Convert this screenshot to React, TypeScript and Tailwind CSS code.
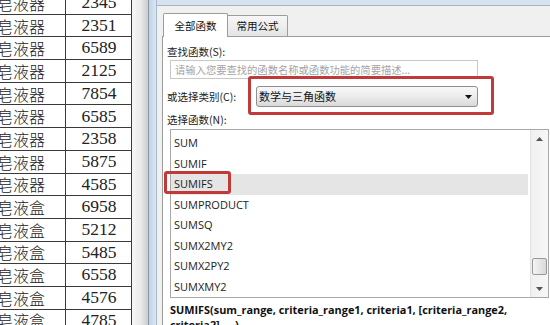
import React from "react";

const rows: [string, string][] = [
  ["皂液器", "2345"],
  ["皂液器", "2351"],
  ["皂液器", "6589"],
  ["皂液器", "2125"],
  ["皂液器", "7854"],
  ["皂液器", "6585"],
  ["皂液器", "2358"],
  ["皂液器", "5875"],
  ["皂液器", "4585"],
  ["皂液盒", "6958"],
  ["皂液盒", "5212"],
  ["皂液盒", "5485"],
  ["皂液盒", "6558"],
  ["皂液盒", "4576"],
  ["皂液盒", "4785"],
];

const funcs = ["SUM", "SUMIF", "SUMIFS", "SUMPRODUCT", "SUMSQ", "SUMX2MY2", "SUMX2PY2", "SUMXMY2"];

const cjk = "font-['Noto_Sans_CJK_SC','Noto_Sans',sans-serif]";
const lat = "font-['Open_Sans','Noto_Sans_CJK_SC',sans-serif]";

export default function App() {
  return (
    <div className="w-[550px] h-[325px] overflow-hidden flex bg-white">
      {/* Spreadsheet */}
      <div className="w-[132px] h-full overflow-hidden bg-white shrink-0">
        <div className="-mt-[8px] flex flex-col">
          {rows.map(([a, b], i) => (
            <div key={i} className="grid grid-cols-[66px_66px] h-[22.7px] border-b border-[#3a3a3a] shrink-0">
              <div className="border-r border-[#3a3a3a] overflow-hidden flex items-center">
                <span className={`${cjk} -ml-[3px] text-[16px] font-light leading-none text-[#222] whitespace-nowrap`}>{a}</span>
              </div>
              <div className="border-r border-[#3a3a3a] flex items-center justify-center">
                <span className="font-['Liberation_Serif',serif] text-[17.5px] leading-none text-[#222] pl-[1px]">{b}</span>
              </div>
            </div>
          ))}
        </div>
      </div>
      {/* Shadow */}
      <div className="w-[16px] h-full shrink-0 bg-gradient-to-r from-[#f6f6f6] via-[#ececec] to-[#cdcdcd]" />
      {/* Window frame */}
      <div className="w-[9px] h-full shrink-0 border-l border-[#8797aa] border-r border-r-[#a9b9cc] bg-gradient-to-r from-[#c3d3e6] to-[#dbe6f2]" />
      {/* Dialog */}
      <div className="flex-1 h-full flex flex-col bg-[#f0f0f0] min-w-0">
        <div className="h-[6px] shrink-0 bg-[#d6e2ef] border-b border-[#a6b5c6]" />
        {/* Tabs */}
        <div className="h-[30px] shrink-0 flex items-end pl-[6px] relative z-10">
          <div className={`${cjk} w-[65px] h-[24px] bg-white border border-[#9c9c9c] border-b-0 rounded-t-[2px] text-[10.5px] text-[#111] flex items-center justify-center mb-[-1px]`}>
            全部函数
          </div>
          <div className={`${cjk} w-[60px] h-[21px] bg-gradient-to-b from-[#f7f7f7] to-[#e4e4e4] border border-[#9c9c9c] border-l-0 border-b-0 rounded-tr-[2px] text-[10.5px] text-[#111] flex items-center justify-center`}>
            常用公式
          </div>
        </div>
        {/* Panel */}
        <div className="flex-1 ml-[5px] bg-white border-l border-t border-[#9c9c9c] pl-[4px] pt-[7px] flex flex-col min-h-0">
          <div className={`${cjk} h-[16px] leading-[16px] text-[10.5px] text-[#222] shrink-0`}>查找函数(S):</div>
          <div className="ml-[3px] w-[308px] h-[19px] border border-[#c8c8c8] flex items-center pl-[4px] shrink-0">
            <span className={`${cjk} text-[10.3px] text-[#a4a4a4] whitespace-nowrap`}>请输入您要查找的函数名称或函数功能的简要描述...</span>
          </div>
          <div className="relative mt-[7px] h-[21px] flex items-center shrink-0">
            <div className={`${cjk} w-[89px] text-[10.5px] text-[#222]`}>或选择类别(C):</div>
            <div className="w-[222px] h-[21px] border border-[#8e8f8f] rounded-[3px] bg-gradient-to-b from-[#f9f9f9] via-[#ececec] to-[#d9d9d9] flex items-center justify-between pl-[2px] pr-[5px]">
              <span className={`${cjk} text-[11px] text-[#111]`}>数学与三角函数</span>
              <svg width="7" height="4" viewBox="0 0 7 4"><path d="M0 0H7L3.5 4Z" fill="#111" /></svg>
            </div>
            <div className="absolute left-[81px] -top-[10px] w-[246px] h-[39px] border-[3px] border-[#c13a3a] rounded-[3px]" />
          </div>
          <div className={`${cjk} mt-[5px] h-[16px] leading-[16px] text-[10.5px] text-[#222] shrink-0`}>选择函数(N):</div>
          <div className="relative mt-[1px] ml-[3px] w-[379px] h-[169px] border border-[#a8a8a8] flex shrink-0">
            <div className="flex-1 pt-[3px] pr-[2px] flex flex-col">
              {funcs.map((f) => (
                <div
                  key={f}
                  className={`${lat} h-[20.5px] leading-[20.5px] pl-[3px] text-[11px] text-[#222] shrink-0 ${f === "SUMIFS" ? "bg-[#e5e5e5]" : ""}`}
                >
                  {f}
                </div>
              ))}
            </div>
            <div className="w-[18px] h-full border-l border-[#e2e2e2] bg-gradient-to-r from-[#f0f0f0] to-[#f7f7f7] flex flex-col items-center">
              <div className="h-[18px] flex items-center justify-center">
                <svg width="7" height="4" viewBox="0 0 7 4"><path d="M0 4L3.5 0L7 4Z" fill="#555" /></svg>
              </div>
              <div className="flex-1" />
              <div className="w-[15px] h-[17px] border border-[#9a9a9a] rounded-[2px] bg-gradient-to-r from-[#f4f4f4] to-[#d9d9d9] mb-[6px]" />
              <div className="h-[16px] flex items-center justify-center">
                <svg width="7" height="4" viewBox="0 0 7 4"><path d="M0 0H7L3.5 4Z" fill="#555" /></svg>
              </div>
            </div>
            <div className="absolute -left-[7px] top-[41px] w-[67px] h-[23px] border-[3px] border-[#c13a3a] rounded-[3px]" />
          </div>
          <div className={`${lat} mt-[4px] ml-[3px] text-[10.9px] leading-[15px] font-bold text-[#111] whitespace-nowrap shrink-0`}>
            SUMIFS(sum_range, criteria_range1, criteria1, [criteria_range2,
          </div>
          <div className={`${lat} ml-[3px] text-[10.9px] leading-[15px] font-bold text-[#111] whitespace-nowrap shrink-0`}>
            criteria2], ...)
          </div>
        </div>
      </div>
    </div>
  );
}
